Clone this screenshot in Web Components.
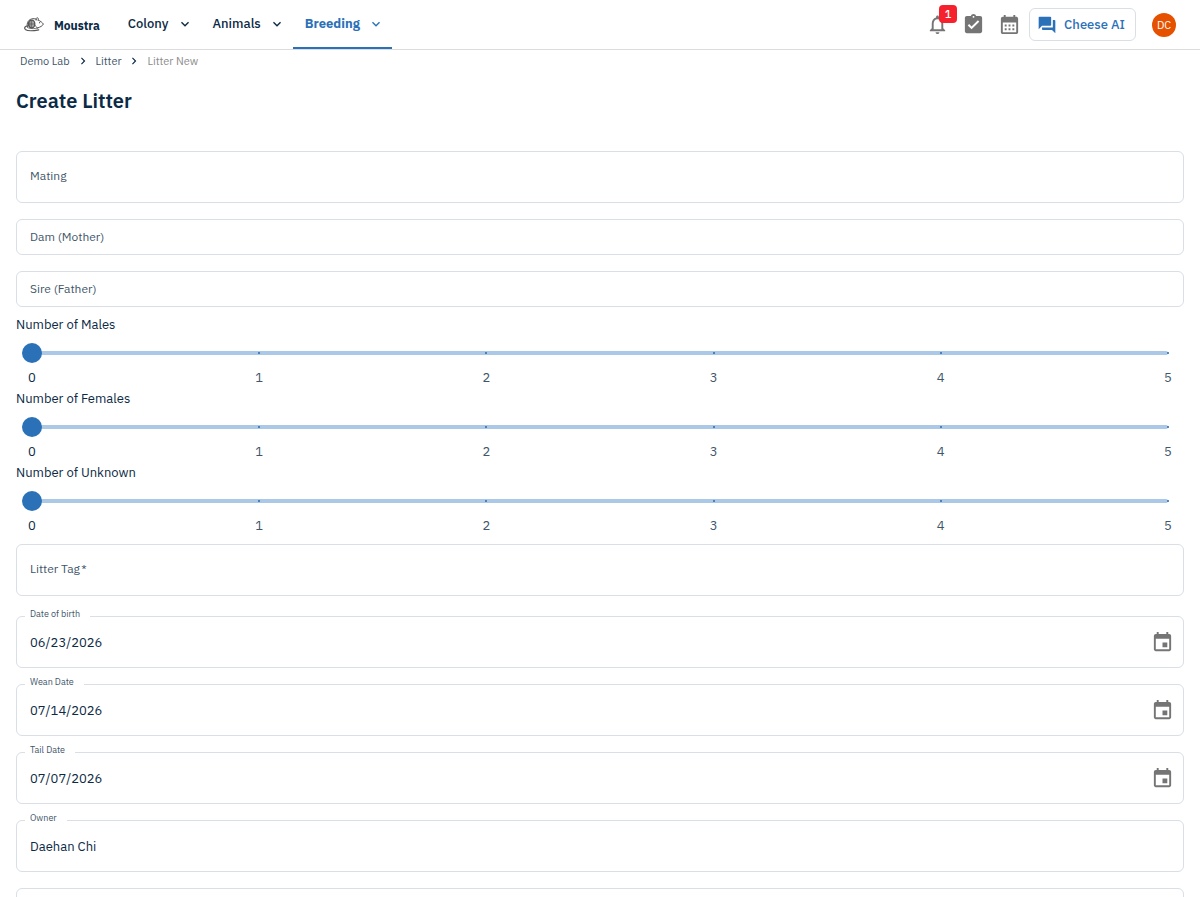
<!DOCTYPE html>
<html lang="en">
<head>
<meta charset="utf-8">
<meta name="viewport" content="width=device-width, initial-scale=1">
<title>Moustra - Create Litter</title>
<style>
  :root {
    --ink: #0b2a45;
    --ink-soft: #41566a;
    --blue: #2b71b8;
    --rail: #abc9e6;
    --line: #d9dfe5;
    --icon: #757575;
  }
  body {
    margin: 0;
    background: #fff;
    color: var(--ink);
    font-family: "IBM Plex Sans", Roboto, sans-serif;
    font-size: 13px;
    line-height: 20px;
  }
</style>
</head>
<body>
<litter-page></litter-page>

<script>
const icons = {
  bell: 'M12 22c1.1 0 2-.9 2-2h-4c0 1.1.9 2 2 2m6-6v-5c0-3.07-1.63-5.64-4.5-6.32V4c0-.83-.67-1.5-1.5-1.5s-1.5.67-1.5 1.5v.68C7.64 5.36 6 7.92 6 11v5l-2 2v1h16v-1zm-2 1H8v-6c0-2.48 1.51-4.5 4-4.5s4 2.02 4 4.5z',
  task: 'M19 3h-4.18C14.4 1.84 13.3 1 12 1s-2.4.84-2.82 2H5c-1.1 0-2 .9-2 2v14c0 1.1.9 2 2 2h14c1.1 0 2-.9 2-2V5c0-1.1-.9-2-2-2m-7 0c.55 0 1 .45 1 1s-.45 1-1 1-1-.45-1-1 .45-1 1-1m-2 14-4-4 1.41-1.41L10 14.17l6.59-6.59L18 9z',
  month: 'M19 4h-1V2h-2v2H8V2H6v2H5c-1.11 0-1.99.9-1.99 2L3 20c0 1.1.89 2 2 2h14c1.1 0 2-.9 2-2V6c0-1.1-.9-2-2-2m0 16H5V10h14zM9 14H7v-2h2zm4 0h-2v-2h2zm4 0h-2v-2h2zm-8 4H7v-2h2zm4 0h-2v-2h2zm4 0h-2v-2h2z',
  event: 'M17 12h-5v5h5v-5zM16 1v2H8V1H6v2H5c-1.11 0-1.99.9-1.99 2L3 19c0 1.1.89 2 2 2h14c1.1 0 2-.9 2-2V5c0-1.1-.9-2-2-2h-1V1h-2zm3 18H5V8h14v11z',
  chat: 'M21 6h-2v9H6v2c0 .55.45 1 1 1h11l4 4V7c0-.55-.45-1-1-1m-4 6V3c0-.55-.45-1-1-1H3c-.55 0-1 .45-1 1v14l4-4h10c.55 0 1-.45 1-1',
  down: 'M7.41 8.59 12 13.17l4.59-4.58L18 10l-6 6-6-6z',
  right: 'M10 6 8.59 7.41 13.17 12l-4.58 4.59L10 18l6-6z'
};

class AppIcon extends HTMLElement {
  constructor() {
    super();
    this.attachShadow({ mode: 'open' });
  }

  connectedCallback() {
    const size = this.getAttribute('size') || 24;
    this.shadowRoot.innerHTML = /*html*/ `
      <style>
        :host { display: inline-flex; flex: none; }
        svg { display: block; fill: currentColor; }
      </style>
      <svg width="${size}" height="${size}" viewBox="0 0 24 24" aria-hidden="true">
        <path d="${icons[this.getAttribute('name')]}"/>
      </svg>
    `;
  }
}
customElements.define('app-icon', AppIcon);

class AppLogo extends HTMLElement {
  constructor() {
    super();
    this.attachShadow({ mode: 'open' }).innerHTML = /*html*/ `
      <style>
        :host { display: block; }
        a {
          display: flex;
          align-items: center;
          gap: 10px;
          color: inherit;
          font-size: 12px;
          font-weight: 700;
          text-decoration: none;
        }
        span { padding-top: 2px; }
        svg { display: block; fill: none; stroke: #555; stroke-linecap: round; }
      </style>
      <a href="#">
        <svg width="20" height="18" viewBox="0 0 20 18" aria-hidden="true">
          <path d="M3.400 11.400C2.200 6.500 4.800 3 9 2.700c1.800-.1 3 .3 4 1"/>
          <ellipse cx="7.600" cy="8" rx="3.200" ry="3.900" fill="#aaa" stroke-width="1.300"/>
          <path d="M7.600 4.400v7.200M5.800 5.400v5.200M4.600 8h6" stroke-width=".7"/>
          <path d="M12 4.200c-.4-1.500.4-2.600 1.400-2.400 1 .2 1.300 1.200.9 2.200M14.400 4.200c2.200.9 3.700 2.200 5 3.800-.9 2-3.100 3.100-6 4"/>
          <circle cx="15.600" cy="6.700" r=".6" fill="#444" stroke="none"/>
          <path d="M3.800 9.800C1 10-.1 12 1.300 13.400c2 1.500 8 1.500 13.500.4" stroke-width="1.200"/>
          <path d="M4.500 12c3 .9 6.500.9 9.500-.1M11.300 9.500c.4 1 1 1.800 1.700 2.300" stroke-width=".8"/>
        </svg>
        <span><slot></slot></span>
      </a>
    `;
  }
}
customElements.define('app-logo', AppLogo);

class NavTab extends HTMLElement {
  constructor() {
    super();
    this.attachShadow({ mode: 'open' }).innerHTML = /*html*/ `
      <style>
        :host { display: flex; }
        button {
          display: flex;
          align-items: center;
          gap: 8px;
          padding: 0 8px 0 12px;
          border: 0;
          border-bottom: 2px solid transparent;
          background: none;
          color: inherit;
          font: inherit;
          font-weight: 500;
          cursor: pointer;
        }
        :host([active]) button {
          border-color: var(--blue);
          color: var(--blue);
          font-weight: 700;
        }
      </style>
      <button type="button" aria-haspopup="true"><slot></slot><app-icon name="down" size="16"></app-icon></button>
    `;
  }
}
customElements.define('nav-tab', NavTab);

class IconButton extends HTMLElement {
  constructor() {
    super();
    this.attachShadow({ mode: 'open' });
  }

  connectedCallback() {
    const count = this.getAttribute('count');
    this.shadowRoot.innerHTML = /*html*/ `
      <style>
        :host { display: block; }
        button {
          position: relative;
          display: grid;
          place-items: center;
          width: 32px;
          height: 32px;
          padding: 0;
          border: 0;
          background: none;
          color: var(--icon);
          font: inherit;
          cursor: pointer;
        }
        .badge {
          position: absolute;
          top: -4px;
          right: -4px;
          width: 18px;
          border-radius: 4px;
          background: #f5222d;
          color: #fff;
          font-size: 11px;
          font-weight: 500;
          line-height: 18px;
        }
      </style>
      <button type="button" aria-label="${this.getAttribute('label')}">
        <app-icon name="${this.getAttribute('icon')}" size="${this.getAttribute('size') || 23}"></app-icon>
        ${count ? `<span class="badge">${count}</span>` : ''}
      </button>
    `;
  }
}
customElements.define('icon-button', IconButton);

class AppHeader extends HTMLElement {
  constructor() {
    super();
    this.attachShadow({ mode: 'open' }).innerHTML = /*html*/ `
      <style>
        :host {
          display: flex;
          align-items: center;
          justify-content: space-between;
          height: 49px;
          padding: 0 24px;
          border-bottom: 1px solid #dcdcdc;
        }
        nav { display: flex; align-self: stretch; align-items: center; }
        nav nav-tab { align-self: stretch; }
        app-logo { margin-right: 16px; }
        .tools { display: flex; align-items: center; gap: 4px; }
        .chat {
          display: flex;
          align-items: center;
          gap: 7px;
          height: 33px;
          padding: 0 10px 0 7px;
          border: 1px solid var(--line);
          border-radius: 6px;
          background: #fff;
          color: var(--blue);
          font: inherit;
          font-weight: 500;
          cursor: pointer;
        }
        .avatar {
          width: 24px;
          height: 24px;
          margin-left: 12px;
          padding: 0;
          border: 0;
          border-radius: 50%;
          background: #e65100;
          color: #fff;
          font: inherit;
          font-size: 11px;
          cursor: pointer;
        }
      </style>
      <nav aria-label="Main">
        <app-logo>Moustra</app-logo>
        <nav-tab>Colony</nav-tab>
        <nav-tab>Animals</nav-tab>
        <nav-tab active>Breeding</nav-tab>
      </nav>
      <div class="tools">
        <icon-button icon="bell" label="Notifications" count="1"></icon-button>
        <icon-button icon="task" label="Tasks"></icon-button>
        <icon-button icon="month" label="Calendar"></icon-button>
        <button class="chat" type="button"><app-icon name="chat" size="20"></app-icon>Cheese AI</button>
        <button class="avatar" type="button">DC</button>
      </div>
    `;
  }
}
customElements.define('app-header', AppHeader);

class BreadCrumbs extends HTMLElement {
  constructor() {
    super();
    this.attachShadow({ mode: 'open' });
  }

  connectedCallback() {
    const steps = this.getAttribute('path').split('/');
    const last = steps.pop();
    this.shadowRoot.innerHTML = /*html*/ `
      <style>
        :host { display: block; padding: 1px 20px 3px; font-size: 11px; }
        nav { display: flex; align-items: center; gap: 6px; }
        a { color: var(--ink-soft); text-decoration: none; }
        span { color: #8c8c8c; }
      </style>
      <nav aria-label="Breadcrumb">
        ${steps.map(s => `<a href="#">${s}</a><app-icon name="right" size="14"></app-icon>`).join('')}
        <span aria-current="page">${last}</span>
      </nav>
    `;
  }
}
customElements.define('bread-crumbs', BreadCrumbs);

class OutlinedField extends HTMLElement {
  constructor() {
    super();
    this.attachShadow({ mode: 'open' });
  }

  connectedCallback() {
    const label = this.getAttribute('label');
    const value = this.getAttribute('value') || '';
    const required = this.hasAttribute('required');
    this.shadowRoot.innerHTML = /*html*/ `
      <style>
        :host { display: block; }
        .box {
          position: relative;
          display: grid;
          grid-template-columns: 1fr auto;
          align-items: center;
          box-sizing: border-box;
          height: 52px;
          padding: 0 5px 0 13px;
          border: 1px solid var(--line);
          border-radius: 6px;
        }
        :host([dense]) .box { height: 36px; }
        label {
          grid-area: 1 / 1;
          padding-bottom: 2px;
          color: var(--ink-soft);
          font-size: 12px;
          pointer-events: none;
        }
        :host([dense]) label { padding-bottom: 0; }
        :host([value]) label {
          grid-area: auto;
          position: absolute;
          top: -10px;
          left: 8px;
          padding: 2px 10px 0 5px;
          background: #fff;
          font-size: 9px;
          line-height: 10px;
        }
        input {
          grid-area: 1 / 1;
          width: 100%;
          box-sizing: border-box;
          padding: 2px 0 0;
          border: 0;
          outline: 0;
          background: none;
          color: var(--ink);
          font: inherit;
          line-height: 20px;
        }
      </style>
      <div class="box">
        <input id="field" type="text" value="${value}" ${required ? 'required' : ''}>
        <label for="field">${label}${required ? '&thinsp;*' : ''}</label>
        ${this.hasAttribute('date') ? '<icon-button icon="event" label="Choose date"></icon-button>' : ''}
      </div>
    `;
  }
}
customElements.define('outlined-field', OutlinedField);

class CountSlider extends HTMLElement {
  constructor() {
    super();
    this.attachShadow({ mode: 'open' });
  }

  connectedCallback() {
    const max = Number(this.getAttribute('max'));
    const steps = Array.from({ length: max + 1 }, (_, i) => i);
    this.shadowRoot.innerHTML = /*html*/ `
      <style>
        :host { display: block; }
        label { display: block; }
        .slider { display: grid; align-items: center; margin: 8px 6px 5px; height: 20px; }
        .slider > * { grid-area: 1 / 1; }
        .rail { height: 4px; margin: 0 10px; border-radius: 2px; background: var(--rail); }
        .ticks { display: flex; justify-content: space-between; padding: 0 9px; opacity: .8; }
        .ticks i { width: 2px; height: 2px; background: var(--blue); }
        input {
          -webkit-appearance: none;
          appearance: none;
          position: relative;
          width: 100%;
          height: 20px;
          margin: 0;
          background: none;
          cursor: pointer;
        }
        input::-webkit-slider-thumb {
          -webkit-appearance: none;
          width: 20px;
          height: 20px;
          border-radius: 50%;
          background: var(--blue);
        }
        .marks { display: flex; justify-content: space-between; margin: 0 6px; color: var(--ink-soft); }
        .marks span { width: 20px; text-align: center; }
        .marks span:first-child { color: var(--ink); }
      </style>
      <label for="range">${this.getAttribute('label')}</label>
      <div class="slider">
        <div class="rail"></div>
        <div class="ticks">${steps.map(() => '<i></i>').join('')}</div>
        <input id="range" type="range" min="0" max="${max}" step="1" value="0">
      </div>
      <div class="marks">${steps.map(i => `<span>${i}</span>`).join('')}</div>
    `;
  }
}
customElements.define('count-slider', CountSlider);

class LitterPage extends HTMLElement {
  constructor() {
    super();
    this.attachShadow({ mode: 'open' }).innerHTML = /*html*/ `
      <style>
        :host { display: block; height: 100vh; overflow: hidden; }
        main { padding: 0 16px; }
        h1 { margin: 13px 0 36px; font-size: 20px; font-weight: 600; line-height: 28px; }
        form, .group { display: grid; gap: 16px; }
        .counts { display: grid; gap: 1px; margin-top: -8px; }
        form > .tag { margin-top: -8px; }
        .group { margin-top: 4px; }
      </style>
      <app-header></app-header>
      <bread-crumbs path="Demo Lab/Litter/Litter New"></bread-crumbs>
      <main>
        <h1>Create Litter</h1>
        <form>
          <outlined-field label="Mating"></outlined-field>
          <outlined-field label="Dam (Mother)" dense></outlined-field>
          <outlined-field label="Sire (Father)" dense></outlined-field>
          <div class="counts">
            <count-slider label="Number of Males" max="5"></count-slider>
            <count-slider label="Number of Females" max="5"></count-slider>
            <count-slider label="Number of Unknown" max="5"></count-slider>
          </div>
          <outlined-field class="tag" label="Litter Tag" required></outlined-field>
          <div class="group">
            <outlined-field label="Date of birth" value="06/23/2026" date></outlined-field>
            <outlined-field label="Wean Date" value="07/14/2026" date></outlined-field>
            <outlined-field label="Tail Date" value="07/07/2026" date></outlined-field>
            <outlined-field label="Owner" value="Daehan Chi"></outlined-field>
            <outlined-field label=""></outlined-field>
          </div>
        </form>
      </main>
    `;
  }
}
customElements.define('litter-page', LitterPage);
</script>
</body>
</html>
